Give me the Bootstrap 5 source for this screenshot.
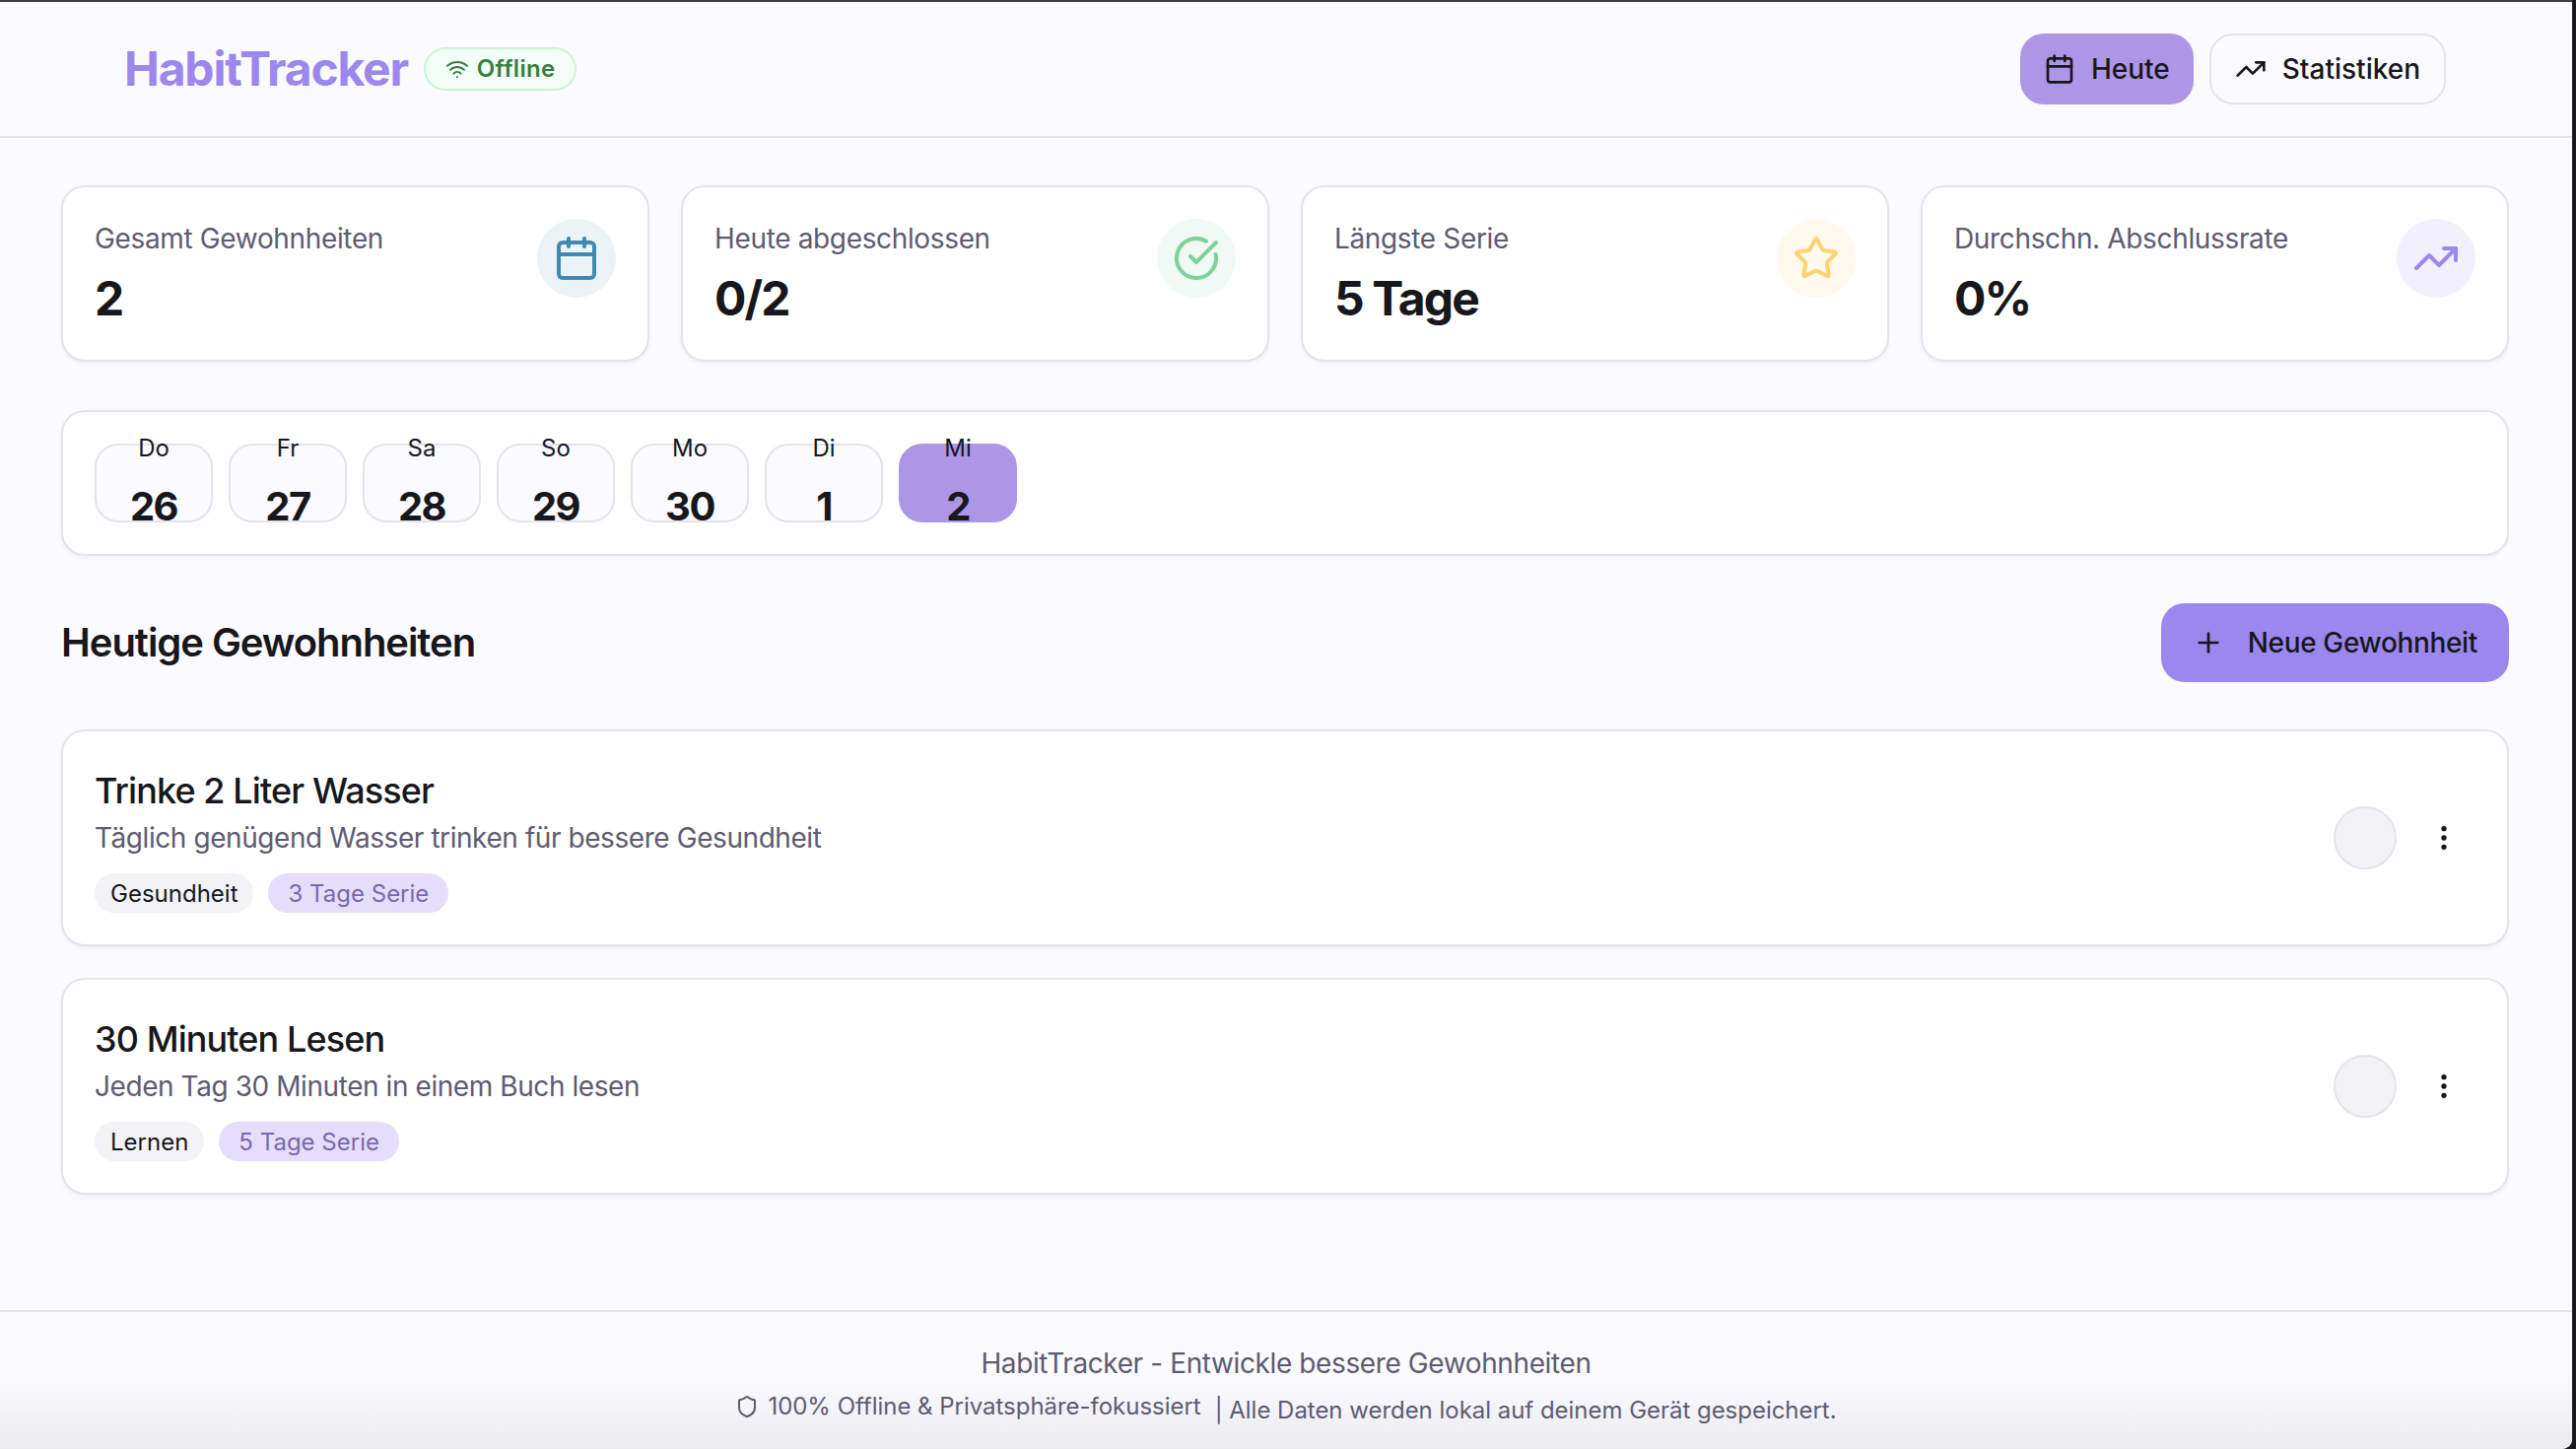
<!DOCTYPE html>
<html lang="de">

<head>
    <meta charset="UTF-8">
    <meta name="viewport" content="width=device-width, initial-scale=1.0">
    <title>HabitTracker</title>
    <link href="https://cdn.jsdelivr.net/npm/bootstrap@5.3.3/dist/css/bootstrap.min.css" rel="stylesheet" crossorigin="anonymous">
    <style>
        html, body { height: 100%; }
        body { background: #1a1a1e; font-family: Inter, "Liberation Sans", sans-serif; color: #17171c; overflow: hidden; }
        svg.ico { fill: none; stroke: currentColor; stroke-width: 2; stroke-linecap: round; stroke-linejoin: round; flex: none; }

        .app-frame { width: 2610px; height: 1470px; background: #fbfaff; border-top: 2px solid #3d3d3d; border-bottom-right-radius: 10px; overflow: hidden; }

        .top-bar { height: 138px; padding: 0 128px 0 126px; border-bottom: 2px solid #e4e3eb; }
        .logo-text { font-size: 48px; font-weight: 700; letter-spacing: -1.2px; color: #9b87ed; line-height: 72px; }
        .offline-pill { height: 44px; padding: 0 20px; gap: 8px; border: 2px solid #c9f3d4; border-radius: 22px; background: #f2fdf5; color: #3a7d40; font-size: 24px; font-weight: 600; letter-spacing: .3px; }
        .nav-pill { height: 72px; padding: 0 24px; gap: 16px; border-radius: 24px; border: 2px solid #e4e3eb; background: transparent; font-size: 28px; font-weight: 500; color: #17171c; }
        .nav-pill.is-active { background: #ad96e6; border: 0; }

        .page-main { padding: 48px 64px 0 62px; }
        .box-card { --bs-card-bg: #fff; --bs-card-border-color: #e4e3eb; --bs-card-border-width: 2px; --bs-card-border-radius: 24px; --bs-card-inner-border-radius: 22px; --bs-card-spacer-x: 32px; --bs-card-spacer-y: 32px; box-shadow: 0 2px 4px rgba(20, 20, 40, .05); }

        .stat-row { --bs-gutter-x: 32px; margin-bottom: 49px; }
        .stat-label { font-size: 28px; line-height: 40px; color: #5e5b71; letter-spacing: -.35px; }
        .stat-value { font-size: 48px; font-weight: 700; line-height: 63px; margin-top: 8px; letter-spacing: -1.9px; position: relative; top: 1px; }
        .stat-icon { width: 80px; height: 80px; border-radius: 50%; }
        .tone-blue { background: #ebf3f7; color: #4089b0; }
        .tone-green { background: #f0f9f4; color: #7dd29a; }
        .tone-yellow { background: #fff9ee; color: #fcd273; }
        .tone-violet { background: #f3f0fe; color: #9b87ed; }

        .day-cell { width: 120px; height: 80px; border: 2px solid #e4e3eb; border-radius: 24px; background: #fbfaff; }
        .day-cell.is-active { background: #ad96e6; border-color: #ad96e6; }
        .day-name { font-size: 24px; line-height: 36px; }
        .day-num { font-size: 40px; font-weight: 700; line-height: 60px; margin-top: 11px; letter-spacing: -1.5px; }

        .section-head { margin: 48px 0; }
        .section-title { font-size: 40px; font-weight: 600; letter-spacing: -1.05px; margin: 0; }
        .add-btn { height: 80px; padding: 0 32px; gap: 24px; border: 0; border-radius: 24px; background: #9b87ed; font-size: 28px; font-weight: 500; letter-spacing: -.35px; color: #17171c; }

        .habit-card { margin-bottom: 32px; }
        .habit-title { font-size: 36px; font-weight: 500; line-height: 56px; letter-spacing: -.9px; }
        .habit-desc { font-size: 28px; line-height: 40px; color: #5e5b71; letter-spacing: -.43px; }
        .tag-list { margin-top: 16px; gap: 15px; }
        .tag-pill { height: 40px; padding: 0 16px; border-radius: 20px; background: #f3f3f6; font-size: 24px; line-height: 41px; color: #17171c; }
        .tag-pill.is-streak { padding: 0 20px; background: #e5defa; color: #7a66b0; }
        .check-dot { width: 64px; height: 64px; border: 2px solid #e4e3eb; border-radius: 50%; background: #f3f3f6; }
        .more-btn { width: 64px; height: 64px; margin-left: 16px; }

        .page-foot { height: 141px; padding-top: 32px; border-top: 2px solid #e4e3eb; background: linear-gradient(to bottom, #fbfaff 45%, #ececf0 100%); color: #5e5b71; text-align: center; }
        .foot-line { font-size: 28px; line-height: 40px; letter-spacing: -.39px; }
        .foot-sub { font-size: 24px; margin-top: 6px; line-height: 36px; letter-spacing: -.03px; }
        .foot-shield { gap: 9px; margin-right: 14px; }
    </style>
</head>

<body>
    <svg width="0" height="0" class="position-absolute">
        <defs>
            <symbol id="i-calendar" viewBox="0 0 24 24"><rect width="18" height="18" x="3" y="4" rx="2"/><path d="M16 2v4"/><path d="M8 2v4"/><path d="M3 10h18"/></symbol>
            <symbol id="i-trend" viewBox="0 0 24 24"><polyline points="22 7 13.5 15.5 8.5 10.5 2 17"/><polyline points="16 7 22 7 22 13"/></symbol>
            <symbol id="i-wifi" viewBox="0 0 24 24"><path d="M12 20h.01"/><path d="M2 8.82a15 15 0 0 1 20 0"/><path d="M5 12.859a10 10 0 0 1 14 0"/><path d="M8.5 16.429a5 5 0 0 1 7 0"/></symbol>
            <symbol id="i-check" viewBox="0 0 24 24"><path d="M21.801 10A10 10 0 1 1 17 3.335"/><path d="m9 11 3 3L22 4"/></symbol>
            <symbol id="i-star" viewBox="0 0 24 24"><path d="M11.525 2.295a.53.53 0 0 1 .95 0l2.31 4.679a2.123 2.123 0 0 0 1.595 1.16l5.166.756a.53.53 0 0 1 .294.904l-3.736 3.638a2.123 2.123 0 0 0-.611 1.878l.882 5.14a.53.53 0 0 1-.771.56l-4.618-2.428a2.122 2.122 0 0 0-1.973 0L6.396 21.01a.53.53 0 0 1-.77-.56l.881-5.139a2.122 2.122 0 0 0-.611-1.879L2.16 9.795a.53.53 0 0 1 .294-.906l5.165-.755a2.122 2.122 0 0 0 1.597-1.16z"/></symbol>
            <symbol id="i-shield" viewBox="0 0 24 24"><path d="M20 13c0 5-3.5 7.5-7.66 8.95a1 1 0 0 1-.67-.01C7.5 20.5 4 18 4 13V6a1 1 0 0 1 1-1c2 0 4.5-1.2 6.24-2.72a1.17 1.17 0 0 1 1.52 0C14.51 3.81 17 5 19 5a1 1 0 0 1 1 1z"/></symbol>
            <symbol id="i-plus" viewBox="0 0 24 24"><path d="M5 12h14"/><path d="M12 5v14"/></symbol>
            <symbol id="i-more" viewBox="0 0 24 24"><circle cx="12" cy="12" r="1"/><circle cx="12" cy="5" r="1"/><circle cx="12" cy="19" r="1"/></symbol>
        </defs>
    </svg>

    <div class="app-frame d-flex flex-column">
        <header class="top-bar d-flex align-items-center justify-content-between flex-shrink-0">
            <div class="d-flex align-items-center gap-3">
                <span class="logo-text">HabitTracker</span>
                <span class="offline-pill d-inline-flex align-items-center">
                    <svg class="ico" width="24" height="24"><use href="#i-wifi"/></svg>Offline
                </span>
            </div>
            <div class="d-flex align-items-center gap-3">
                <button type="button" class="nav-pill is-active d-inline-flex align-items-center">
                    <svg class="ico" width="32" height="32"><use href="#i-calendar"/></svg>Heute
                </button>
                <button type="button" class="nav-pill d-inline-flex align-items-center">
                    <svg class="ico" width="32" height="32"><use href="#i-trend"/></svg>Statistiken
                </button>
            </div>
        </header>

        <main class="page-main flex-grow-1">
            <div class="row row-cols-4 stat-row">
                <div class="col">
                    <div class="card box-card"><div class="card-body d-flex justify-content-between">
                        <div>
                            <div class="stat-label">Gesamt Gewohnheiten</div>
                            <div class="stat-value">2</div>
                        </div>
                        <div class="stat-icon tone-blue d-flex align-items-center justify-content-center">
                            <svg class="ico" width="48" height="48"><use href="#i-calendar"/></svg>
                        </div>
                    </div></div>
                </div>
                <div class="col">
                    <div class="card box-card"><div class="card-body d-flex justify-content-between">
                        <div>
                            <div class="stat-label">Heute abgeschlossen</div>
                            <div class="stat-value">0/2</div>
                        </div>
                        <div class="stat-icon tone-green d-flex align-items-center justify-content-center">
                            <svg class="ico" width="48" height="48"><use href="#i-check"/></svg>
                        </div>
                    </div></div>
                </div>
                <div class="col">
                    <div class="card box-card"><div class="card-body d-flex justify-content-between">
                        <div>
                            <div class="stat-label">Längste Serie</div>
                            <div class="stat-value">5 Tage</div>
                        </div>
                        <div class="stat-icon tone-yellow d-flex align-items-center justify-content-center">
                            <svg class="ico" width="48" height="48"><use href="#i-star"/></svg>
                        </div>
                    </div></div>
                </div>
                <div class="col">
                    <div class="card box-card"><div class="card-body d-flex justify-content-between">
                        <div>
                            <div class="stat-label">Durchschn. Abschlussrate</div>
                            <div class="stat-value">0%</div>
                        </div>
                        <div class="stat-icon tone-violet d-flex align-items-center justify-content-center">
                            <svg class="ico" width="48" height="48"><use href="#i-trend"/></svg>
                        </div>
                    </div></div>
                </div>
            </div>

            <div class="card box-card">
                <div class="card-body d-flex gap-3">
                    <div class="day-cell d-flex flex-column align-items-center justify-content-center"><div class="day-name">Do</div><div class="day-num">26</div></div>
                    <div class="day-cell d-flex flex-column align-items-center justify-content-center"><div class="day-name">Fr</div><div class="day-num">27</div></div>
                    <div class="day-cell d-flex flex-column align-items-center justify-content-center"><div class="day-name">Sa</div><div class="day-num">28</div></div>
                    <div class="day-cell d-flex flex-column align-items-center justify-content-center"><div class="day-name">So</div><div class="day-num">29</div></div>
                    <div class="day-cell d-flex flex-column align-items-center justify-content-center"><div class="day-name">Mo</div><div class="day-num">30</div></div>
                    <div class="day-cell d-flex flex-column align-items-center justify-content-center"><div class="day-name">Di</div><div class="day-num">1</div></div>
                    <div class="day-cell is-active d-flex flex-column align-items-center justify-content-center"><div class="day-name">Mi</div><div class="day-num">2</div></div>
                </div>
            </div>

            <div class="section-head d-flex align-items-center justify-content-between">
                <h2 class="section-title">Heutige Gewohnheiten</h2>
                <button type="button" class="add-btn d-inline-flex align-items-center">
                    <svg class="ico" width="32" height="32"><use href="#i-plus"/></svg>Neue Gewohnheit
                </button>
            </div>

            <div class="card box-card habit-card">
                <div class="card-body d-flex align-items-center justify-content-between">
                    <div>
                        <div class="habit-title">Trinke 2 Liter Wasser</div>
                        <div class="habit-desc">Täglich genügend Wasser trinken für bessere Gesundheit</div>
                        <div class="tag-list d-flex">
                            <span class="tag-pill">Gesundheit</span>
                            <span class="tag-pill is-streak">3 Tage Serie</span>
                        </div>
                    </div>
                    <div class="d-flex align-items-center">
                        <div class="check-dot"></div>
                        <div class="more-btn d-flex align-items-center justify-content-center">
                            <svg class="ico" width="32" height="32"><use href="#i-more"/></svg>
                        </div>
                    </div>
                </div>
            </div>

            <div class="card box-card habit-card">
                <div class="card-body d-flex align-items-center justify-content-between">
                    <div>
                        <div class="habit-title">30 Minuten Lesen</div>
                        <div class="habit-desc">Jeden Tag 30 Minuten in einem Buch lesen</div>
                        <div class="tag-list d-flex">
                            <span class="tag-pill">Lernen</span>
                            <span class="tag-pill is-streak">5 Tage Serie</span>
                        </div>
                    </div>
                    <div class="d-flex align-items-center">
                        <div class="check-dot"></div>
                        <div class="more-btn d-flex align-items-center justify-content-center">
                            <svg class="ico" width="32" height="32"><use href="#i-more"/></svg>
                        </div>
                    </div>
                </div>
            </div>
        </main>

        <footer class="page-foot flex-shrink-0">
            <div class="foot-line">HabitTracker - Entwickle bessere Gewohnheiten</div>
            <div class="foot-sub">
                <span class="foot-shield d-inline-flex align-items-center"><svg class="ico" width="24" height="24"><use href="#i-shield"/></svg>100% Offline &amp; Privatsphäre-fokussiert</span>| Alle Daten werden lokal auf deinem Gerät gespeichert.
            </div>
        </footer>
    </div>

    <script src="https://cdn.jsdelivr.net/npm/bootstrap@5.3.3/dist/js/bootstrap.bundle.min.js" crossorigin="anonymous"></script>
</body>

</html>
